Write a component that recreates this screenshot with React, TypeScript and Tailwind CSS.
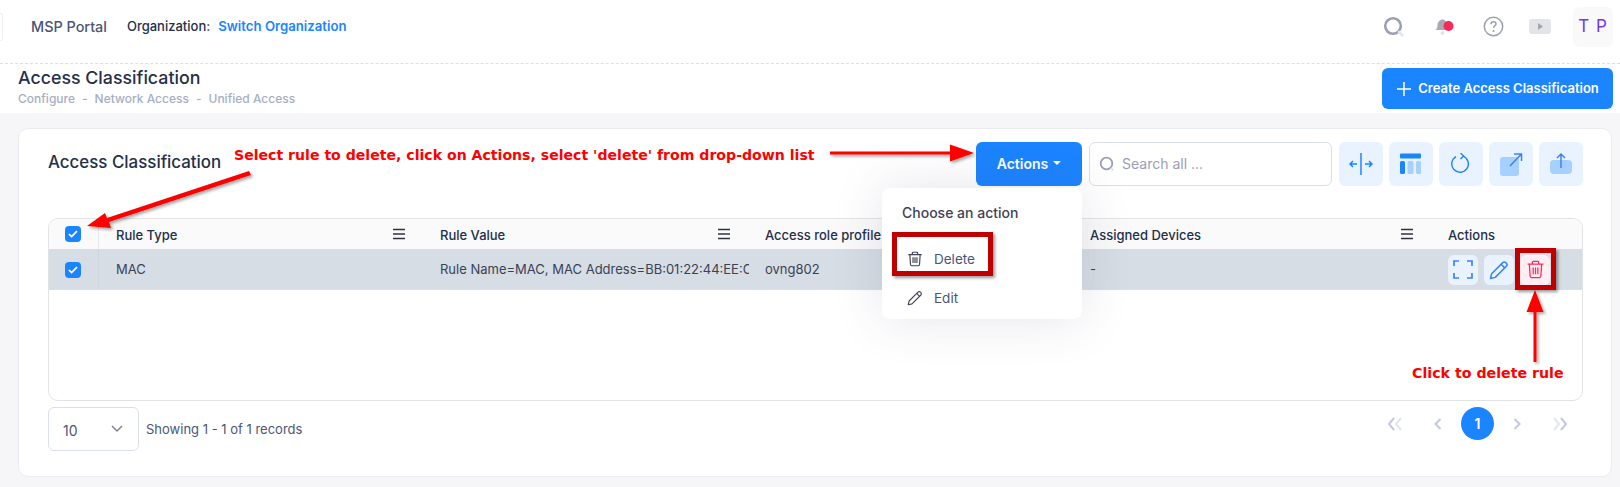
import React from "react";

const Menu = () => (
  <svg width="14" height="12" viewBox="0 0 14 12" className="shrink-0">
    <path d="M1 1.5h12M1 6h12M1 10.5h12" stroke="#2f3340" strokeWidth="1.4" fill="none" />
  </svg>
);

const Check = () => (
  <span className="flex h-4 w-4 items-center justify-center rounded-[4px] bg-[#1b84ff]">
    <svg width="10" height="8" viewBox="0 0 10 8">
      <path d="M1 4l2.6 2.6L9 1.2" stroke="#fff" strokeWidth="1.7" fill="none" />
    </svg>
  </span>
);

const Trash = ({ color, size = 18, sw = 1.3 }: { color: string; size?: number; sw?: number }) => (
  <svg width={size} height={size} viewBox="0 0 18 18" fill="none" stroke={color} strokeWidth={sw}>
    <path d="M1.5 4h15M6 4V2.2C6 1.7 6.4 1.4 6.8 1.4h4.4c.4 0 .8.3.8.8V4M3.2 4l.7 11.2c.1.8.6 1.4 1.4 1.4h7.4c.8 0 1.3-.6 1.4-1.4L14.8 4" />
    <path d="M6.8 7v6.5M9 7v6.5M11.2 7v6.5" />
  </svg>
);

const Pencil = ({ color, size = 16, sw = 1.3 }: { color: string; size?: number; sw?: number }) => (
  <svg width={size} height={size} viewBox="0 0 16 16" fill="none" stroke={color} strokeWidth={sw} strokeLinejoin="round">
    <path d="M1.2 14.8l.9-3.8L11 2.1c.7-.7 1.7-.7 2.4 0l.5.5c.7.7.7 1.7 0 2.4L5 13.9l-3.8.9z" />
    <path d="M9.7 3.4l2.9 2.9" />
  </svg>
);

const ToolBtn = ({ children }: { children: React.ReactNode }) => (
  <button className="flex h-[44px] w-[44px] items-center justify-center rounded-[6px] bg-[#e9f3ff]">{children}</button>
);

const HeadCell = ({ label, menu = true, first = false }: { label: string; menu?: boolean; first?: boolean }) => (
  <div className={`flex items-center justify-between pr-[18px] text-[13px] font-medium text-[#252f4a] ${first ? "pl-[17px]" : "pl-4"}`}>
    <span className="mt-[3px]">{label}</span>
    {menu && <Menu />}
  </div>
);

const Chevrons = ({ dir }: { dir: "l" | "r" }) => (
  <svg width="18" height="14" viewBox="0 0 18 14" fill="none" strokeWidth="2">
    {dir === "l" ? (
      <>
        <path d="M7 1L2 7l5 6" stroke="#c4cada" />
        <path d="M14 1L9 7l5 6" stroke="#e3e6ef" />
      </>
    ) : (
      <>
        <path d="M4 1l5 6-5 6" stroke="#e3e6ef" />
        <path d="M11 1l5 6-5 6" stroke="#c4cada" />
      </>
    )}
  </svg>
);

const Annotations = () => (
  <>
    <svg className="pointer-events-none absolute left-0 top-0" width="1620" height="487" viewBox="0 0 1620 487">
      <defs>
        <filter id="sh" x="-10%" y="-30%" width="120%" height="160%">
          <feDropShadow dx="2" dy="2" stdDeviation="1.5" floodColor="#000" floodOpacity="0.35" />
        </filter>
      </defs>
      <g filter="url(#sh)" fill="#ff0000">
        <path d="M830 151.5h120v-7l24 8.5-24 8.500v-7H830z" />
        <path d="M87 226l18-13 2 5 142-47 2 4-142 47 2 6z" />
        <path d="M1533.5 362V312h-7l8.5-22 8.500 22h-7v50z" />
      </g>
    </svg>
    <span className="absolute left-[234px] top-[145px] whitespace-nowrap font-['DejaVu_Sans'] text-[14.1px] font-bold leading-[20px] text-[#ff0000]">
      Select rule to delete, click on Actions, select 'delete' from drop-down list
    </span>
    <span className="absolute left-[1412px] top-[363px] whitespace-nowrap font-['DejaVu_Sans'] text-[14.2px] font-bold leading-[20px] text-[#ff0000]">
      Click to delete rule
    </span>
    <div className="absolute left-[892px] top-[232px] h-[44px] w-[101px] border-[5px] border-[#c00000] shadow-[2px_2px_3px_rgba(0,0,0,0.4)]" />
    <div className="absolute left-[1515px] top-[248px] h-[42px] w-[41px] border-[5px] border-[#c00000] shadow-[2px_2px_3px_rgba(0,0,0,0.4)]" />
  </>
);

export default function App() {
  return (
    <div className="relative h-[487px] w-[1620px] overflow-hidden bg-white font-['Inter',sans-serif]">
      <header className="flex h-[64px] items-center border-b border-dashed border-[#dbdfe9] pb-[10px]">
        <div className="h-[28px] w-[3px] rounded-r-[4px] border border-l-0 border-[#eef0f5]" />
        <span className="ml-[28px] text-[14.4px] font-medium text-[#4b5675]">MSP Portal</span>
        <span className="ml-[20px] text-[13px] font-medium text-[#252f4a]">Organization:</span>
        <span className="ml-[8px] text-[13.2px] font-semibold text-[#1b84ff]">Switch Organization</span>
        <div className="ml-auto mr-[7px] flex items-center">
          <svg width="22" height="22" viewBox="0 0 22 22" fill="none" className="mr-[29px]">
            <circle cx="10" cy="10" r="7.800" stroke="#9a9fb3" strokeWidth="2.600" />
            <path d="M16 16l3.500 3.500" stroke="#e3e5ec" strokeWidth="2.600" strokeLinecap="round" />
          </svg>
          <svg width="20" height="20" viewBox="0 0 20 20" className="mr-[29px]">
            <path d="M1 13c2-1 2.500-2.500 2.500-5C3.500 5 6 2.500 8.500 2.500S13 5 13 8v5z" fill="#a9a9b5" />
            <circle cx="8.500" cy="16" r="2" fill="#e3e4ea" />
            <circle cx="14.500" cy="9" r="5" fill="#f8285a" />
          </svg>
          <svg width="21" height="21" viewBox="0 0 21 21" fill="none" className="mr-[25px]">
            <circle cx="10.500" cy="10.500" r="9.200" stroke="#9a9fb3" strokeWidth="1.500" />
            <path d="M8 8.200c0-1.500 1.100-2.400 2.500-2.400s2.500.9 2.500 2.200c0 1.900-2.500 1.900-2.500 3.800" stroke="#9a9fb3" strokeWidth="1.500" />
            <circle cx="10.500" cy="15" r="1" fill="#9a9fb3" />
          </svg>
          <svg width="22" height="15" viewBox="0 0 22 15" className="mr-[22px]">
            <rect width="22" height="15" rx="3" fill="#e3e4ea" />
            <path d="M9 4l5 3.500-5 3.500z" fill="#a5a5b2" />
          </svg>
          <div className="flex h-[40px] w-[40px] items-center justify-center rounded-[6px] bg-[#f9f9f9] text-[17px] tracking-[1px] text-[#7239ea]">
            T P
          </div>
        </div>
      </header>

      <section className="flex h-[49px] items-start justify-between bg-white pl-[18px] pr-[7px]">
        <div>
          <h1 className="mt-[3px] text-[17.8px] font-medium leading-[22px] text-[#252f4a]">Access Classification</h1>
          <p className="mt-[2px] flex gap-[7px] text-[12px] font-medium leading-[16px] text-[#a7aec2]">
            <span>Configure</span><span>-</span><span>Network Access</span><span>-</span><span>Unified Access</span>
          </p>
        </div>
        <button className="mt-[4px] flex h-[41px] w-[231px] items-center justify-center gap-[6px] rounded-[6px] bg-[#1b84ff] text-[13px] font-semibold text-white">
          <svg width="16" height="16" viewBox="0 0 16 16"><path d="M8 1v14M1 8h14" stroke="#fff" strokeWidth="1.500" /></svg>
          Create Access Classification
        </button>
      </section>

      <main className="h-[374px] bg-[#f6f6f8] pl-[18px] pr-[8px] pt-[15px]">
        <div className="flex h-[349px] flex-col rounded-[10px] border border-[#eaecf2] bg-white pl-[29px] pr-[28px] pt-[13px]">
          <div className="flex h-[44px] items-center">
            <h2 className="mb-[3px] text-[16.900px] font-medium text-[#252f4a]">Access Classification</h2>
            <div className="ml-auto flex items-center gap-[6px]">
              <button className="mr-[1px] flex h-[44px] w-[106px] items-center justify-center gap-[5px] rounded-[6px] bg-[#1b84ff] pb-[1px] text-[14px] font-semibold text-white">
                Actions
                <span className="mb-[2px] h-0 w-0 border-x-[4px] border-t-[4px] border-x-transparent border-t-white" />
              </button>
              <div className="mr-[1px] flex h-[44px] w-[243px] items-center rounded-[6px] border border-[#dbdfe9] pb-[1px] pl-[9px] text-[14px] text-[#9a9fb3]">
                <svg width="16" height="16" viewBox="0 0 16 16" fill="none" className="mr-[7px]">
                  <circle cx="7.500" cy="7.500" r="5.800" stroke="#9a9fb3" strokeWidth="1.800" />
                  <path d="M11.800 11.800l2.500 2.500" stroke="#dfe1e8" strokeWidth="1.800" />
                </svg>
                Search all ...
              </div>
              <ToolBtn>
                <svg width="24" height="22" viewBox="0 0 24 22" fill="none" stroke="#1b84ff" strokeWidth="1.500">
                  <path d="M12 0v22" />
                  <path d="M1 11h7M4 8l-3 3 3 3M23 11h-7M20 8l3 3-3 3" />
                </svg>
              </ToolBtn>
              <ToolBtn>
                <svg width="22" height="22" viewBox="0 0 22 22">
                  <rect y="0.500" width="21" height="5" rx="1" fill="#1b84ff" />
                  <rect y="8" width="5" height="13" rx="1.500" fill="#1b84ff" />
                  <rect x="7.500" y="8" width="6" height="13" rx="1.500" fill="#a5d0ff" />
                  <rect x="16" y="8" width="5" height="13" rx="1.500" fill="#a5d0ff" />
                </svg>
              </ToolBtn>
              <ToolBtn>
                <svg width="20" height="22" viewBox="0 0 20 22" fill="none" stroke="#1b84ff" strokeWidth="1.400">
                  <path d="M12 3.200a8.300 8.300 0 1 1-7 .5" />
                  <path d="M9.500 0l3 3-3 3" />
                </svg>
              </ToolBtn>
              <ToolBtn>
                <svg width="24" height="24" viewBox="0 0 24 24" fill="none">
                  <rect x="1" y="5" width="19" height="19" rx="3" fill="#a5d0ff" />
                  <path d="M11 14L22 2.500M15 2h7.500v7" stroke="#3b82f6" strokeWidth="1.500" />
                </svg>
              </ToolBtn>
              <ToolBtn>
                <svg width="22" height="24" viewBox="0 0 22 24" fill="none">
                  <rect y="8" width="22" height="14" rx="4" fill="#a5d0ff" />
                  <path d="M11 16V2M7 6l4-4 4 4" stroke="#3b82f6" strokeWidth="1.500" />
                </svg>
              </ToolBtn>
            </div>
          </div>

          <div className="mt-[32px] h-[183px] overflow-hidden rounded-[10px] border border-[#e2e3e6]">
            <div className="grid h-[30px] grid-cols-[50px_325px_325px_325px_358px_150px] bg-[#fafafa]">
              <div className="flex items-center justify-center border-r border-[#e6e7ea] pr-[2px]"><Check /></div>
              <HeadCell label="Rule Type" first />
              <HeadCell label="Rule Value" />
              <HeadCell label="Access role profile" />
              <HeadCell label="Assigned Devices" />
              <HeadCell label="Actions" menu={false} />
            </div>
            <div className="grid h-[41px] grid-cols-[50px_325px_325px_325px_358px_150px] items-center bg-[#d6dde4] text-[13px] text-[#3a4256]">
              <div className="flex h-full items-center justify-center border-r border-[#cfd6dd] pr-[2px]"><Check /></div>
              <div className="pl-[17px]">MAC</div>
              <div className="mt-[1px] overflow-hidden whitespace-nowrap pl-[16px]">Rule Name=MAC, MAC Address=BB:01:22:44:EE:CC</div>
              <div className="pl-4">ovng802</div>
              <div className="pl-4">-</div>
              <div className="flex items-center gap-[6px] pl-[16px]">
                <span className="flex h-[30px] w-[30px] items-center justify-center rounded-[6px] bg-[#e9f3ff]">
                  <svg width="20" height="19" viewBox="0 0 20 19" fill="none" stroke="#3b82f6" strokeWidth="1.700">
                    <path d="M1 6V1h5M14 1h5v5M19 13v5h-5M6 18H1v-5" />
                  </svg>
                </span>
                <span className="flex h-[30px] w-[30px] items-center justify-center rounded-[6px] bg-[#e9f3ff]">
                  <Pencil color="#3b82f6" size={20} sw={1.200} />
                </span>
                <span className="flex h-[30px] w-[30px] items-center justify-center rounded-[6px] bg-[#ffeef3]">
                  <Trash color="#f8285a" size={19} sw={1.200} />
                </span>
              </div>
            </div>
          </div>

          <div className="mt-[6px] flex items-start">
            <div className="flex h-[44px] w-[91px] items-center justify-between rounded-[6px] border border-[#dbdfe9] pl-[14px] pr-[15px] text-[14px] text-[#4b5675]">
              <span className="mt-[2px]">10</span>
              <svg width="12" height="8" viewBox="0 0 12 8" fill="none"><path d="M1 1l5 5 5-5" stroke="#7f8496" strokeWidth="1.500" /></svg>
            </div>
            <span className="ml-[7px] mt-[13px] text-[13px] text-[#4b5675]">Showing 1 - 1 of 1 records</span>
            <div className="ml-auto mr-[15px] flex h-[33px] items-center">
              <Chevrons dir="l" />
              <svg width="8" height="14" viewBox="0 0 8 14" fill="none" className="ml-[29px]"><path d="M6.500 2L1.500 7l5 5" stroke="#c4cada" strokeWidth="2" /></svg>
              <span className="ml-[19px] flex h-[33px] w-[33px] items-center justify-center rounded-full bg-[#1b84ff] text-[14px] font-semibold text-white">1</span>
              <svg width="8" height="14" viewBox="0 0 8 14" fill="none" className="ml-[19px]"><path d="M1.500 2l5 5-5 5" stroke="#c4cada" strokeWidth="2" /></svg>
              <span className="ml-[29px]"><Chevrons dir="r" /></span>
            </div>
          </div>
        </div>
      </main>

      <div className="absolute left-[882px] top-[188px] h-[131px] w-[200px] rounded-[8px] bg-white shadow-[0_0_50px_0_rgba(82,63,105,0.15)]">
        <div className="pl-[20px] pt-[16px] text-[14px] font-medium leading-[18px] text-[#3f4254]">Choose an action</div>
        <div className="mt-[27px] flex items-center pl-[25px] text-[13.500px] text-[#4b5675]">
          <Trash color="#3f4254" size={16} sw={1.300} />
          <span className="ml-[11px]">Delete</span>
        </div>
        <div className="mt-[19px] flex items-center pl-[25px] text-[13.500px] text-[#4b5675]">
          <Pencil color="#3f4254" size={16} sw={1.100} />
          <span className="ml-[11px]">Edit</span>
        </div>
      </div>

      <Annotations />
    </div>
  );
}
